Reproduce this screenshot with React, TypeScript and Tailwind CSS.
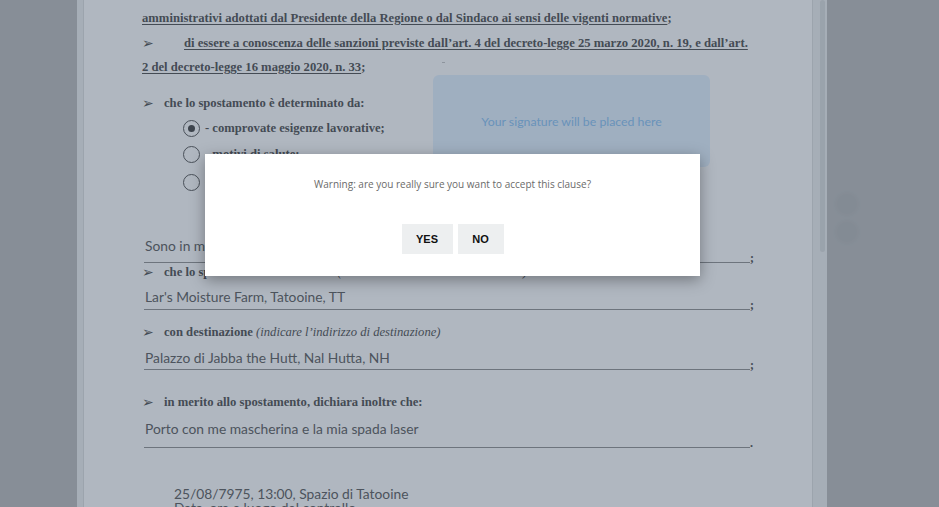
import { Fragment } from 'react';

const serif = "font-['Liberation_Serif',serif] font-bold text-[12.65px] text-[#555]";
const hand = "font-['Lato',sans-serif] text-[13.8px] text-[#626262]";
const arrow = "font-['DejaVu_Sans',sans-serif] text-[14px] leading-[16px] text-[#555] shrink-0";

function Bullet({ children }: { children: React.ReactNode }) {
  return (
    <div className="flex h-[16px] items-center">
      <span className={`${arrow} w-[22px]`}>➢</span>
      <span className={serif}>{children}</span>
    </div>
  );
}

function Field({ value, end, pad, top }: { value: string; end: string; pad: string; top: string }) {
  return (
    <div className={`ml-[2px] flex items-end pr-[58px] ${top}`}>
      <div className={`flex-1 border-b border-[#959595] ${pad}`}>
        <div className={`h-[20px] leading-[20px] pl-[1px] ${hand}`}>{value}</div>
      </div>
      <span className="w-[4px] font-['Liberation_Serif',serif] text-[12px] font-bold leading-[10px] text-[#555]">
        {end}
      </span>
    </div>
  );
}

function Radio({ label, checked }: { label: string; checked?: boolean }) {
  return (
    <div className="flex h-[24px] items-center pl-[41px]">
      <span className="flex h-[17px] w-[17px] items-center justify-center rounded-full border-[1.5px] border-[#5c5c5c]">
        {checked && <span className="h-[7px] w-[7px] rounded-full bg-[#4a4a4a]" />}
      </span>
      <span className={`${serif} ml-[5px]`}>{label}</span>
    </div>
  );
}

export default function App() {
  return (
    <div className="relative h-[507px] w-full overflow-hidden bg-[#bebfbf]">
      <div className="flex h-full">
        <div className="w-[77px] shrink-0" />

        {/* page column */}
        <div className="flex w-[750px] shrink-0">
          <div className="w-[7px] border-r border-[#e0e1e1] bg-[#f0f1f1]" />
          <div className="relative flex-1 border-r border-[#e0e1e1] bg-white pl-[58px] pt-[6px]">
            <div className="flex h-[24px] items-center">
              <span className={serif}>
                <span className="underline underline-offset-[2px]">
                  amministrativi adottati dal Presidente della Regione o dal Sindaco ai sensi delle vigenti normative
                </span>
                ;
              </span>
            </div>
            <div className="mt-[1px] flex h-[24px] items-center">
              <span className={`${arrow} w-[42px]`}>➢</span>
              <span className={`${serif} underline underline-offset-[2px]`}>
                di essere a conoscenza delle sanzioni previste dall’art. 4 del decreto-legge 25 marzo 2020, n. 19, e dall’art.
              </span>
            </div>
            <div className="flex h-[24px] items-center">
              <span className={serif}>
                <span className="underline underline-offset-[2px]">2 del decreto-legge 16 maggio 2020, n. 33</span>;
              </span>
            </div>

            <div className="mt-[16px]">
              <Bullet>che lo spostamento è determinato da:</Bullet>
            </div>
            <div className="mt-[5px]">
              <Radio label="- comprovate esigenze lavorative;" checked />
            </div>
            <div className="mt-[2px]">
              <Radio label="- motivi di salute;" />
            </div>
            <div className="mt-[4px]">
              <Radio label="- situazioni di necessità;" />
            </div>

            <Field value="Sono in missione" end=";" pad="pb-[6px]" top="mt-[42px]" />
            <div className="mt-[1px]">
              <Bullet>
                che lo spostamento è iniziato da{' '}
                <span className="font-normal italic">(indicare l’indirizzo da cui è iniziato)</span>
              </Bullet>
            </div>
            <Field value="Lar's Moisture Farm, Tatooine, TT" end=";" pad="pb-[2px]" top="mt-[7px]" />
            <div className="mt-[14px]">
              <Bullet>
                con destinazione{' '}
                <span className="font-normal italic">(indicare l’indirizzo di destinazione)</span>
              </Bullet>
            </div>
            <Field value="Palazzo di Jabba the Hutt, Nal Hutta, NH" end=";" pad="pb-[1px]" top="mt-[8px]" />
            <div className="mt-[24px]">
              <Bullet>in merito allo spostamento, dichiara inoltre che:</Bullet>
            </div>
            <Field value="Porto con me mascherina e la mia spada laser" end="." pad="pb-[8px]" top="mt-[9px]" />

            <div className={`ml-[32px] mt-[36px] h-[16px] leading-[20px] ${hand}`}>
              25/08/7975, 13:00, Spazio di Tatooine
            </div>
            <div className={`ml-[32px] h-[16px] leading-[16px] ${hand}`}>Data, ora e luogo del controllo</div>

            {/* signature placeholder */}
            <div className="absolute left-[349px] top-[75px] flex h-[92px] w-[277px] items-center justify-center rounded-[6px] bg-[#e5f2ff] pt-[2px]">
              <span className="font-['Lato',sans-serif] text-[12.3px] text-[#8ec6f6]">
                Your signature will be placed here
              </span>
            </div>
            <span className="absolute left-[358px] top-[62px] h-[1px] w-[3px] bg-[#c8c8c8]" />
          </div>
          <div className="w-[14px] bg-[#f0f1f1] pl-[7px]">
            <div className="h-[252px] w-[5px] rounded-full bg-[#dddfdf]" />
          </div>
        </div>

        {/* floating action buttons, faded behind the backdrop */}
        <div className="flex flex-1 flex-col gap-[8px] pl-[10px] pt-[194px]">
          <span className="h-[20px] w-[20px] rounded-full bg-[rgba(0,0,0,0.03)] shadow-[0_0_5px_2px_rgba(0,0,0,0.025)]" />
          <span className="h-[20px] w-[20px] rounded-full bg-[rgba(0,0,0,0.03)] shadow-[0_0_5px_2px_rgba(0,0,0,0.025)]" />
        </div>
      </div>

      {/* modal backdrop */}
      <div className="absolute inset-0 bg-[rgba(42,60,84,0.37)]" />

      <div className="absolute left-[205px] top-[154px] flex h-[122px] w-[495px] flex-col items-center bg-white shadow-[0_4px_14px_rgba(0,0,0,0.35)]">
        <p className="mt-[22px] font-['Open_Sans',sans-serif] text-[10px] leading-[16px] text-[#6a6a6a]">
          Warning: are you really sure you want to accept this clause?
        </p>
        <div className="mt-[32px] flex gap-[5px]">
          {['YES', 'NO'].map((label) => (
            <Fragment key={label}>
              <button
                className={`h-[30px] bg-[#edeff0] font-['Liberation_Sans',sans-serif] text-[11px] font-bold text-[#111] ${
                  label === 'YES' ? 'w-[51px]' : 'w-[46px]'
                }`}
              >
                {label}
              </button>
            </Fragment>
          ))}
        </div>
      </div>
    </div>
  );
}
